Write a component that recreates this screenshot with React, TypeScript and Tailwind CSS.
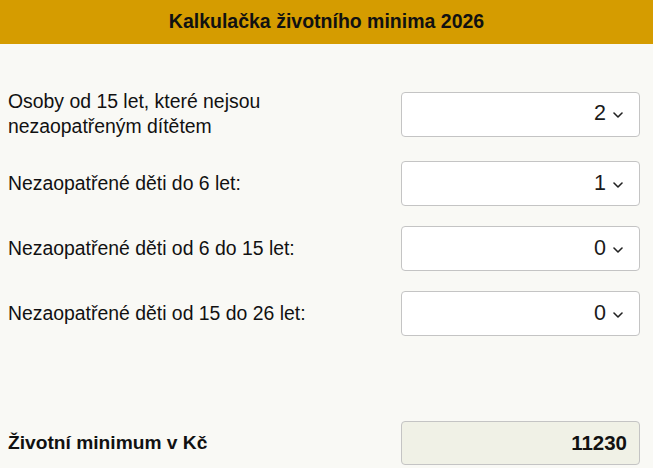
import React from "react";

const Chevron = () => (
  <svg width="10" height="6" viewBox="0 0 10 6" className="ml-[7px] mt-[2px]" fill="none">
    <path d="M1 1l4 4 4-4" stroke="#222" strokeWidth="1.6" strokeLinecap="round" strokeLinejoin="round" />
  </svg>
);

const SelectBox = ({ value }: { value: string }) => (
  <div className="w-[239px] h-[45px] shrink-0 bg-white border border-[#c4c4c4] rounded-[4px] flex items-center justify-end pr-[16px]">
    <span className="text-[21.5px] leading-none text-[#1a1a1a]">{value}</span>
    <Chevron />
  </div>
);

export default function App() {
  const rows = [
    { label: "Nezaopatřené děti do 6 let:", value: "1" },
    { label: "Nezaopatřené děti od 6 do 15 let:", value: "0" },
    { label: "Nezaopatřené děti od 15 do 26 let:", value: "0" },
  ];
  return (
    <div
      className="w-[653px] h-[468px] bg-[#f9f9f5] overflow-hidden text-[#111]"
      style={{ fontFamily: '"Liberation Sans", Arial, sans-serif' }}
    >
      <div className="h-[44px] bg-[#d59c00] flex items-center justify-center">
        <h1 className="text-[19.5px] font-bold text-[#111] leading-none">Kalkulačka životního minima 2026</h1>
      </div>
      <div className="pl-[8px] pr-[13px] pt-[45px]">
        <div className="flex items-center justify-between">
          <div className="text-[19.4px] leading-[25px]">
            Osoby od 15 let, které nejsou
            <br />
            nezaopatřeným dítětem
          </div>
          <SelectBox value="2" />
        </div>
        <div className="flex flex-col gap-[20px] mt-[22px]">
          {rows.map((r) => (
            <div key={r.label} className="flex items-center justify-between">
              <div className="text-[19.4px] leading-[25px]">{r.label}</div>
              <SelectBox value={r.value} />
            </div>
          ))}
        </div>
        <div className="flex items-center justify-between mt-[85px]">
          <div className="text-[19.2px] font-bold">Životní minimum v Kč</div>
          <div className="w-[239px] h-[44px] bg-[#f0f1e6] border border-[#c4c4c4] rounded-[4px] flex items-center justify-end pr-[12px]">
            <span className="text-[20.5px] font-bold leading-none">11230</span>
          </div>
        </div>
      </div>
    </div>
  );
}
